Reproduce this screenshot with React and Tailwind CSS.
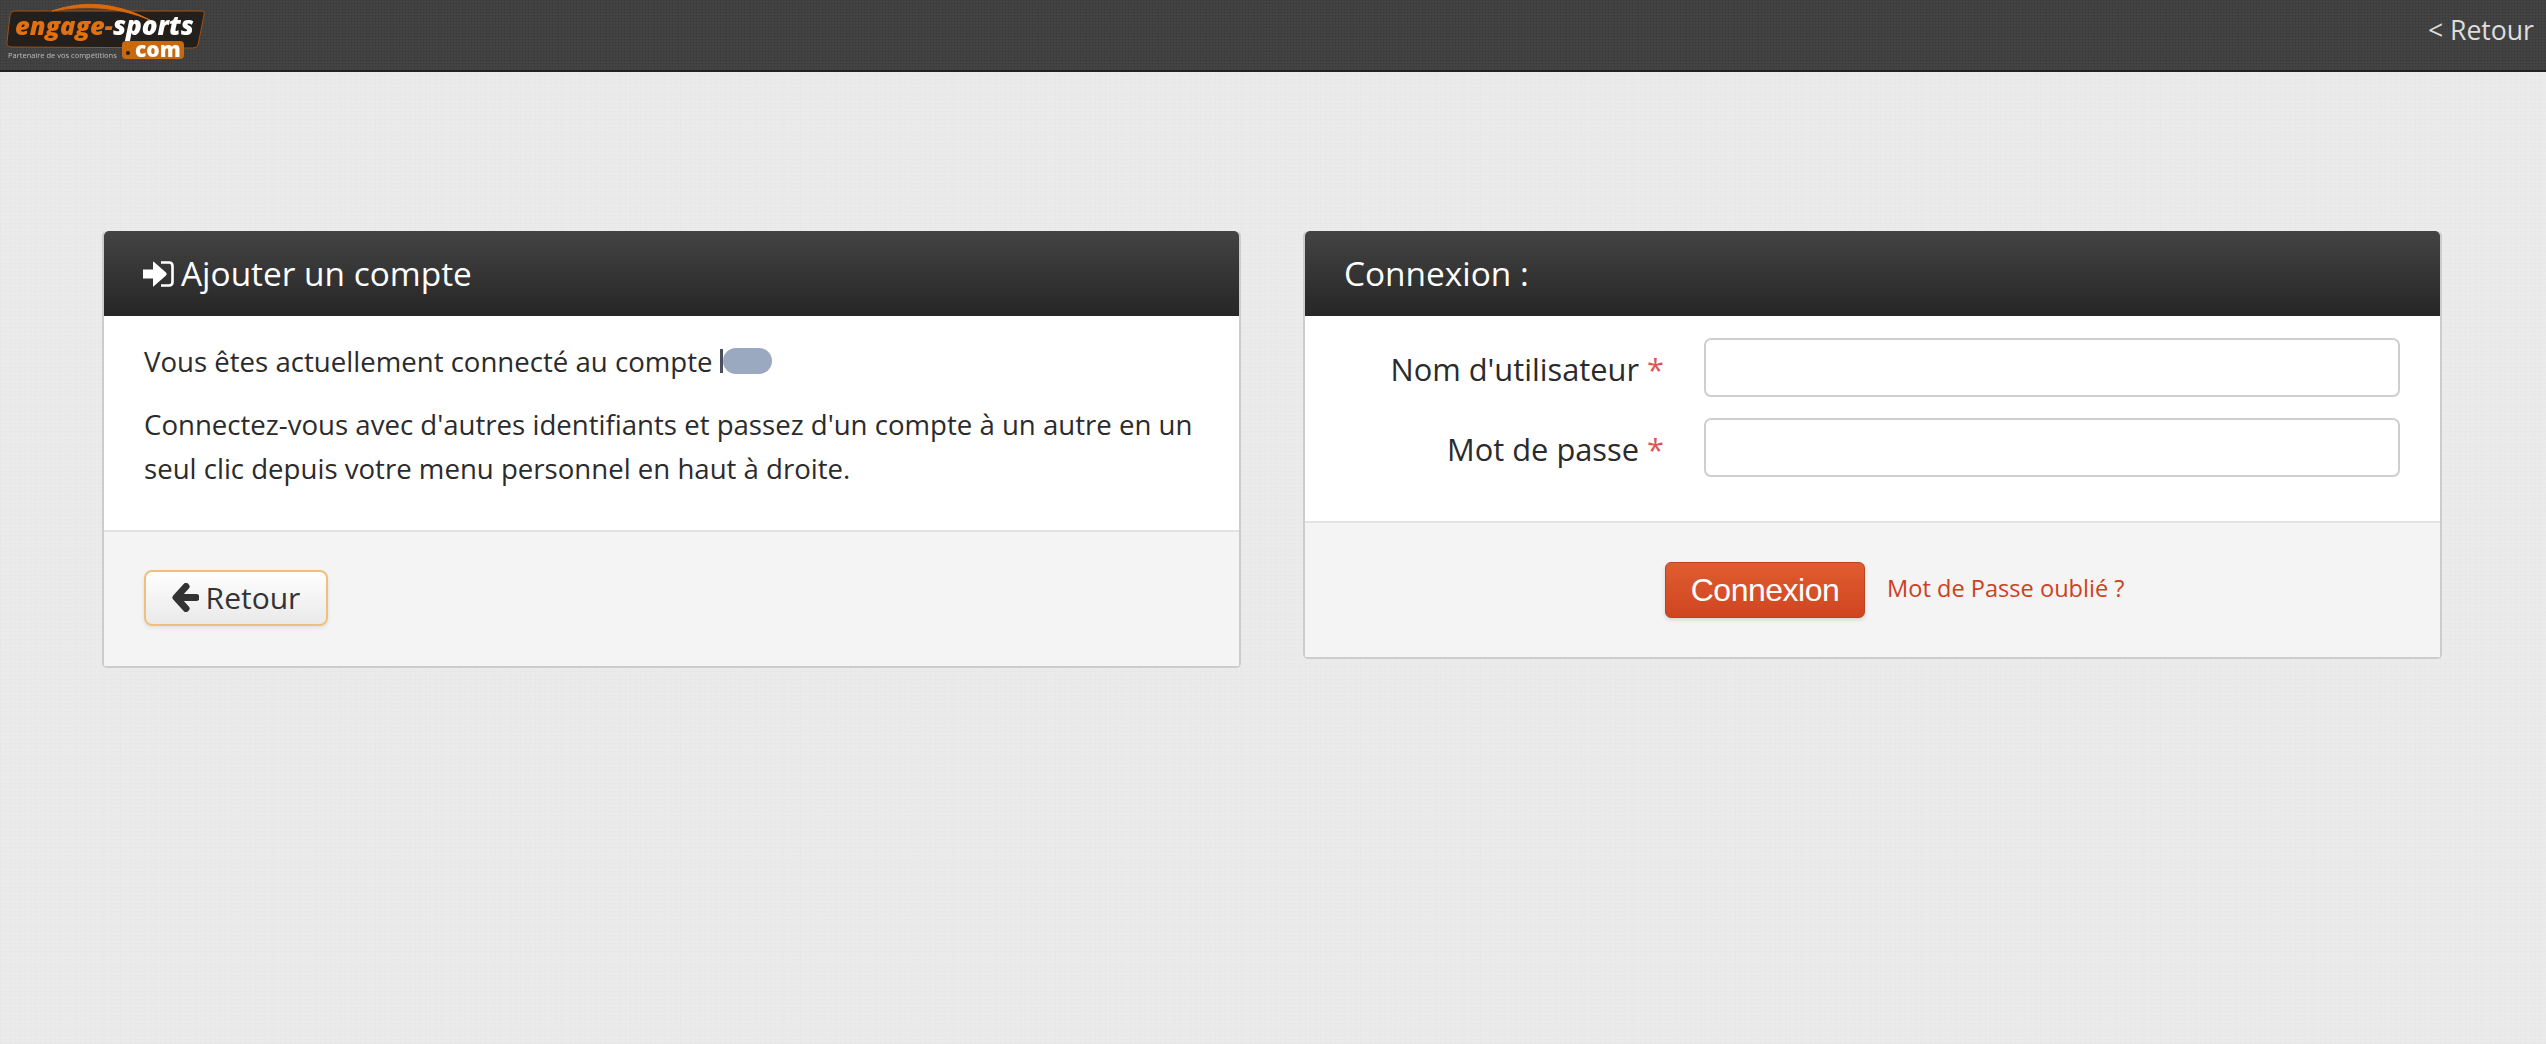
const fontStack = "font-['Open_Sans','Noto_Sans',sans-serif]";
const linen =
  "bg-[#ebebeb] bg-[repeating-linear-gradient(0deg,rgba(0,0,0,0.007)_0px,rgba(0,0,0,0.007)_1px,transparent_1px,transparent_4px),repeating-linear-gradient(90deg,rgba(0,0,0,0.008)_0px,rgba(0,0,0,0.008)_1px,transparent_1px,transparent_5px),repeating-linear-gradient(90deg,rgba(0,0,0,0.005)_0px,rgba(0,0,0,0.005)_2px,transparent_2px,transparent_17px),repeating-linear-gradient(0deg,rgba(0,0,0,0.005)_0px,rgba(0,0,0,0.005)_2px,transparent_2px,transparent_13px)]";
const mesh =
  "bg-[#444444] bg-[repeating-linear-gradient(0deg,rgba(0,0,0,0.07)_0px,rgba(0,0,0,0.07)_1px,transparent_1px,transparent_3px),repeating-linear-gradient(90deg,rgba(0,0,0,0.07)_0px,rgba(0,0,0,0.07)_1px,transparent_1px,transparent_3px)]";

function Logo() {
  return (
    <svg width="210" height="64" viewBox="0 0 210 64" className="block blur-[0.4px]">
      <path d="M14 11 L201 11 Q205 11 204 15 L198 45 Q197 48 193 48 L12 47 Q6 47 7 42 L10 15 Q11 11 14 11 Z" fill="#221f1d" stroke="#a5500f" strokeWidth="1" />
      <path d="M52 11 Q100 -6 150 20 Q105 1 52 11 Z" fill="#d9690f" stroke="#d9690f" strokeWidth="1" />
      <rect x="122" y="41" width="62" height="18" rx="4" fill="#c9690f" />
      <circle cx="128" cy="53" r="2" fill="#221f1d" />
      <text x="15" y="35" fontFamily="'Open Sans', sans-serif" fontWeight="800" fontStyle="italic" fontSize="25.4" fill="#e2700f">engage-</text>
      <text x="113" y="35" fontFamily="'Open Sans', sans-serif" fontWeight="800" fontStyle="italic" fontSize="26" fill="#ffffff">sports</text>
      <text x="135" y="57" fontFamily="'Open Sans', sans-serif" fontWeight="800" fontSize="21" fill="#ffffff">com</text>
      <text x="8" y="58" fontFamily="'Open Sans', sans-serif" fontSize="7.5" fill="#bdbdbd">Partenaire de vos compétitions</text>
    </svg>
  );
}

function LoginIcon() {
  return (
    <svg width="31" height="26" viewBox="0 0 31 26" className="shrink-0" fill="#ffffff">
      <path d="M0 8.5 H10 V1 Q10 0 11 1 L23 11.5 Q24.5 13 23 14.5 L11 25 Q10 26 10 25 V17.5 H0 Z" />
      <path d="M18 1.5 H26 Q29.5 1.5 29.5 5 V21 Q29.5 24.5 26 24.5 H18" fill="none" stroke="#ffffff" strokeWidth="2.6" />
    </svg>
  );
}

function BackArrow() {
  return (
    <svg width="27" height="29" viewBox="0 0 27 29" className="shrink-0">
      <path d="M14 3.5 L4 14.5 L14 25.5 M5 14.5 H24" fill="none" stroke="#333333" strokeWidth="7" strokeLinecap="round" strokeLinejoin="round" />
    </svg>
  );
}

function PanelHead({ children }) {
  return (
    <div className="flex h-[85px] items-center gap-[7px] rounded-t-[5px] bg-gradient-to-b from-[#444444] to-[#262626] px-[39px] text-[33.4px] text-white">
      {children}
    </div>
  );
}

function Field({ label }) {
  return (
    <div className="flex items-center">
      <label className="mt-[3px] w-[359px] text-right text-[30.8px] leading-[44px] text-[#2b2b2b]">
        {label} <span className="text-[#e0555a]">*</span>
      </label>
      <input className="ml-[40px] h-[59px] w-[696px] rounded-[7px] border-2 border-[#cfcfcf] bg-white" />
    </div>
  );
}

export default function App() {
  return (
    <div className={`min-h-[1044px] ${linen} ${fontStack}`}>
      <header className={`flex h-[72px] items-start justify-between border-b-2 border-[#222222] ${mesh}`}>
        <Logo />
        <a className="mr-[12px] mt-[11px] text-[26.6px] text-[#dddddd]">&lt; Retour</a>
      </header>

      <main className="flex items-start gap-[62px] pl-[102px] pt-[159px]">
        <section className="w-[1139px] rounded-[5px] border-2 border-t-0 border-[#cccccc] bg-white">
          <PanelHead>
            <LoginIcon />
            <span>Ajouter un compte</span>
          </PanelHead>
          <div className="px-[40px] pb-[40px] pt-[23px] text-[27.6px] leading-[44px] text-[#2b2b2b]">
            <p className="mb-[19px] flex items-center">
              Vous êtes actuellement connecté au compte
              <span className="ml-[7px] inline-block h-[24px] w-[3px] bg-[#4a4f59]" />
              <span className="h-[26px] w-[49px] rounded-[13px] bg-[#9aa9bf]" />
            </p>
            <p>
              Connectez-vous avec d'autres identifiants et passez d'un compte à un autre en un
              <br />
              seul clic depuis votre menu personnel en haut à droite.
            </p>
          </div>
          <div className="border-t-2 border-[#e3e3e3] bg-[#f4f4f4] px-[40px] pb-[40px] pt-[38px]">
            <button className="flex h-[56px] w-[184px] items-center justify-center gap-[7px] rounded-[8px] border-2 border-[#efbf7d] bg-gradient-to-b from-white to-[#e9e9e9] pb-[2px] text-[30px] text-[#333333] shadow-[0_2px_4px_rgba(0,0,0,0.08)]">
              <BackArrow />
              Retour
            </button>
          </div>
        </section>

        <section className="w-[1139px] rounded-[5px] border-2 border-t-0 border-[#cccccc] bg-white">
          <PanelHead>
            <span>Connexion :</span>
          </PanelHead>
          <div className="flex flex-col gap-[21px] pb-[44px] pt-[22px]">
            <Field label="Nom d'utilisateur" />
            <Field label="Mot de passe" />
          </div>
          <div className="flex items-start gap-[22px] border-t-2 border-[#e3e3e3] bg-[#f4f4f4] pb-[39px] pl-[360px] pt-[39px]">
            <button className="h-[56px] w-[200px] rounded-[6px] border border-[#bb4420] bg-gradient-to-b from-[#e05c30] to-[#cf4520] font-['Liberation_Sans',sans-serif] text-[32px] tracking-[-0.5px] text-white shadow-[0_2px_4px_rgba(0,0,0,0.12)]">
              Connexion
            </button>
            <a className="mt-[8px] text-[23.6px] leading-[36px] text-[#cf3f22]">Mot de Passe oublié ?</a>
          </div>
        </section>
      </main>
    </div>
  );
}
